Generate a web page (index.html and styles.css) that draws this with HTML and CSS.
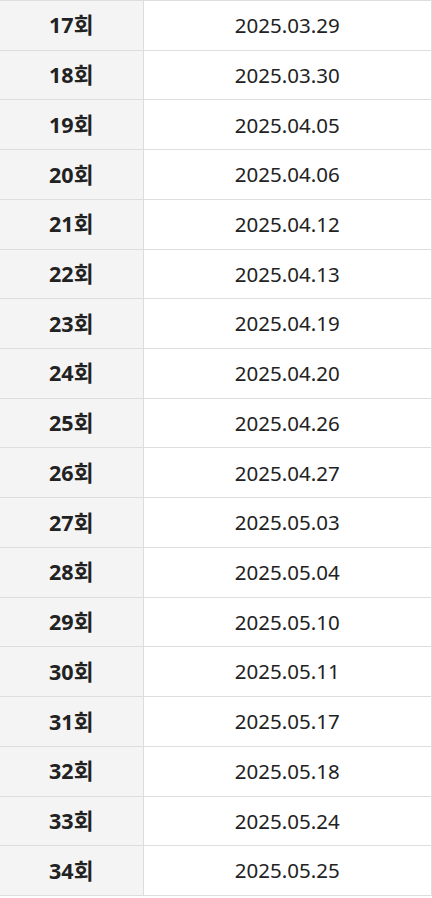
FILE: index.html
```html
<!DOCTYPE html>
<html lang="ko">
<head>
<meta charset="utf-8">
<link rel="stylesheet" href="styles.css">
</head>
<body>
<table class="schedule">
<tbody>
<tr><th>17회</th><td>2025.03.29</td></tr>
<tr><th>18회</th><td>2025.03.30</td></tr>
<tr><th>19회</th><td>2025.04.05</td></tr>
<tr><th>20회</th><td>2025.04.06</td></tr>
<tr><th>21회</th><td>2025.04.12</td></tr>
<tr><th>22회</th><td>2025.04.13</td></tr>
<tr><th>23회</th><td>2025.04.19</td></tr>
<tr><th>24회</th><td>2025.04.20</td></tr>
<tr><th>25회</th><td>2025.04.26</td></tr>
<tr><th>26회</th><td>2025.04.27</td></tr>
<tr><th>27회</th><td>2025.05.03</td></tr>
<tr><th>28회</th><td>2025.05.04</td></tr>
<tr><th>29회</th><td>2025.05.10</td></tr>
<tr><th>30회</th><td>2025.05.11</td></tr>
<tr><th>31회</th><td>2025.05.17</td></tr>
<tr><th>32회</th><td>2025.05.18</td></tr>
<tr><th>33회</th><td>2025.05.24</td></tr>
<tr><th>34회</th><td>2025.05.25</td></tr>
</tbody>
</table>
</body>
</html>
```
FILE: styles.css
```css
html, body {
  margin: 0;
  padding: 0;
  background: #fff;
}
.schedule {
  width: 432px;
  border-collapse: collapse;
  table-layout: fixed;
  font-family: "Noto Sans", "Noto Sans CJK KR", sans-serif;
  color: #222;
  font-size: 20.5px;
}
.schedule th,
.schedule td {
  border: 1px solid #ddd;
  height: 49.72px;
  padding: 0;
  text-align: center;
  vertical-align: middle;
  box-sizing: border-box;
  line-height: 1.2;
}
.schedule th {
  width: 143px;
  background: #f4f4f4;
  font-weight: 700;
  font-size: 21.5px;
  border-left: none;
}
.schedule td {
  font-weight: 400;
}
```
